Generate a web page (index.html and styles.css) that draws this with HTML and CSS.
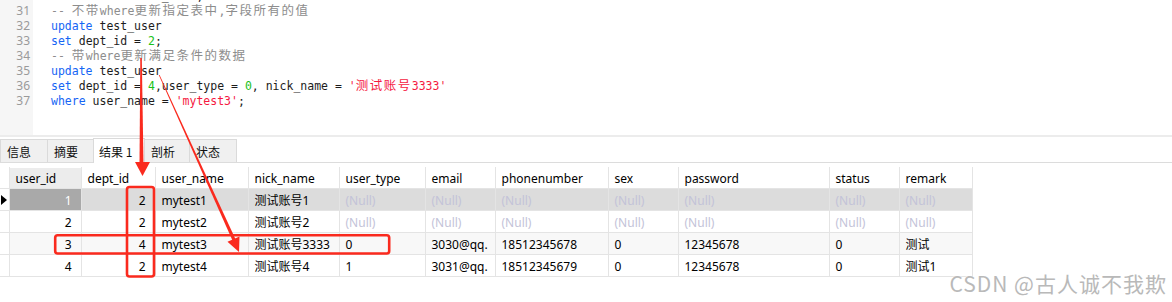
FILE: index.html
```html
<!DOCTYPE html>
<html lang="zh">
<head>
<meta charset="utf-8">
<title>update test_user</title>
<link rel="stylesheet" href="styles.css">
</head>
<body>
<div class="page">
  <div class="editor">
    <div class="gutter">
      <div class="lines">
        <div>30</div><div>31</div><div>32</div><div>33</div><div>34</div><div>35</div><div>36</div><div>37</div>
      </div>
    </div>
    <div class="code">
      <div class="lines">
        <div><span class="kw">delete</span> <span class="kw">from</span> test_user;</div>
        <div class="cm">-- <span class="w">不带</span>where<span class="w">更新指定表中</span>,<span class="w">字段所有的值</span></div>
        <div><span class="kw">update</span> test_user</div>
        <div><span class="kw">set</span> dept_id = <span class="num">2</span>;</div>
        <div class="cm">-- <span class="w">带</span>where<span class="w">更新满足条件的数据</span></div>
        <div><span class="kw">update</span> test_user</div>
        <div><span class="kw">set</span> dept_id = <span class="num">4</span>,user_type = <span class="num">0</span>, nick_name = <span class="str">'<span class="w">测试账号</span>3333'</span></div>
        <div><span class="kw">where</span> user_name = <span class="str">'mytest3'</span>;</div>
      </div>
    </div>
  </div>

  <div class="rule"></div>

  <div class="tabbar">
    <div class="tab">信息</div>
    <div class="tab">摘要</div>
    <div class="tab active">结果 1</div>
    <div class="tab">剖析</div>
    <div class="tab">状态</div>
  </div>

  <div class="result">
    <table class="grid">
      <colgroup>
        <col class="c-ind"><col class="c-uid"><col class="c-did"><col class="c-uname"><col class="c-nick"><col class="c-type"><col class="c-email"><col class="c-phone"><col class="c-sex"><col class="c-pass"><col class="c-status"><col class="c-remark">
      </colgroup>
      <thead>
        <tr>
          <th class="ind"></th><th class="sortcol">user_id</th><th>dept_id</th><th>user_name</th><th>nick_name</th><th>user_type</th><th>email</th><th>phonenumber</th><th>sex</th><th>password</th><th>status</th><th>remark</th>
        </tr>
      </thead>
      <tbody>
        <tr class="sel">
          <td class="ind"><span class="tri"></span></td><td class="r cur">1</td><td class="r">2</td><td>mytest1</td><td>测试账号1</td><td class="null">(Null)</td><td class="null">(Null)</td><td class="null">(Null)</td><td class="null">(Null)</td><td class="null">(Null)</td><td class="null">(Null)</td><td class="null">(Null)</td>
        </tr>
        <tr>
          <td class="ind"></td><td class="r">2</td><td class="r">2</td><td>mytest2</td><td>测试账号2</td><td class="null">(Null)</td><td class="null">(Null)</td><td class="null">(Null)</td><td class="null">(Null)</td><td class="null">(Null)</td><td class="null">(Null)</td><td class="null">(Null)</td>
        </tr>
        <tr class="alt">
          <td class="ind"></td><td class="r">3</td><td class="r">4</td><td>mytest3</td><td>测试账号3333</td><td>0</td><td>3030@qq.</td><td>18512345678</td><td>0</td><td>12345678</td><td>0</td><td>测试</td>
        </tr>
        <tr>
          <td class="ind"></td><td class="r">4</td><td class="r">2</td><td>mytest4</td><td>测试账号4</td><td>1</td><td>3031@qq.</td><td>18512345679</td><td>0</td><td>12345678</td><td>0</td><td>测试1</td>
        </tr>
      </tbody>
    </table>
  </div>

  <svg class="marks" width="1172" height="302" viewBox="0 0 1172 302" aria-hidden="true">
    <rect x="127" y="187" width="27" height="89.5" rx="2.5" fill="none" stroke="#fa2a1e" stroke-width="2.6"/>
    <rect x="55.2" y="235.3" width="334" height="18.2" rx="2.5" fill="none" stroke="#fa2a1e" stroke-width="2.6"/>
    <polygon points="140.3,58 141.8,58 143.5,164 139.5,164" fill="#fa2a1e"/>
    <polygon points="135,162 150,162 142.5,176" fill="#fa2a1e"/>
    <polygon points="158.8,75 159.6,75 236.8,242 233.6,243" fill="#fa2a1e"/>
    <polygon points="239,252 239.5,236.5 227.5,241.8" fill="#fa2a1e"/>
  </svg>

  <div class="watermark">CSDN @古人诚不我欺</div>
</div>
</body>
</html>
```

FILE: styles.css
```css
* { box-sizing: border-box; }

html, body {
  margin: 0;
  padding: 0;
  background: #ffffff;
}

body {
  font-family: "Noto Sans", "Noto Sans CJK SC", sans-serif;
  font-size: 12px;
  color: #000;
}

.page {
  position: relative;
  width: 1172px;
  height: 302px;
  overflow: hidden;
}

/* ---------- editor ---------- */
.editor {
  display: flex;
  height: 135px;
  overflow: hidden;
}

.gutter {
  width: 33px;
  background: #f6f6f6;
  color: #9a9a9a;
  text-align: right;
  padding-right: 3px;
  font-family: "Noto Sans", sans-serif;
  font-size: 12px;
}

.lines {
  margin-top: -12px;
}

.lines > div {
  height: 15px;
  line-height: 15px;
  white-space: pre;
}

.code {
  flex: 1;
  padding-left: 18px;
  font-family: "DejaVu Sans Mono", "Noto Sans CJK SC", monospace;
  font-size: 11.5px;
  color: #1c1c1c;
}

.code .lines {
  margin-top: -11px;
}

.code .w {
  font-family: "Noto Sans CJK SC", sans-serif;
  font-size: 12.5px;
  letter-spacing: 1.5px;
  line-height: 10px;
}

.kw { color: #1565f5; }
.num { color: #19c219; }
.str { color: #f5193f; }
.cm { color: #8d8d8d; }

/* ---------- tab bar ---------- */
.rule {
  height: 2px;
  background: #ececec;
}

.tabbar {
  display: flex;
  align-items: flex-end;
  height: 26px;
  border-bottom: 1px solid #dcdcdc;
}

.tab {
  height: 23px;
  line-height: 24px;
  padding: 0 6px;
  background: #f0f0f0;
  border: 1px solid #dadada;
  border-bottom: none;
  margin-right: -1px;
  font-family: "Noto Sans CJK SC", sans-serif;
  font-size: 12px;
  color: #111;
}

.tab:nth-child(1) { width: 48px; }
.tab:nth-child(2) { width: 47px; }
.tab:nth-child(3) { width: 52px; }
.tab:nth-child(4) { width: 46px; }
.tab:nth-child(5) { width: 48px; }

.tab.active {
  height: 25px;
  line-height: 25px;
  background: #ffffff;
  position: relative;
  bottom: -1px;
  padding-left: 5px;
}

/* ---------- result grid ---------- */
.result {
  padding-top: 4px;
}

.grid {
  border-collapse: collapse;
  table-layout: fixed;
  width: 972px;
}

.c-ind { width: 9px; }
.c-uid { width: 72px; }
.c-did { width: 74px; }
.c-uname { width: 93px; }
.c-nick { width: 91px; }
.c-type { width: 86px; }
.c-email { width: 70px; }
.c-phone { width: 113px; }
.c-sex { width: 70px; }
.c-pass { width: 151px; }
.c-status { width: 70px; }
.c-remark { width: 73px; }

.grid th,
.grid td {
  border: 1px solid #e4e4e4;
  padding: 2px 6px 0;
  height: 22px;
  line-height: 18px;
  text-align: left;
  font-weight: normal;
  white-space: nowrap;
  overflow: hidden;
  font-family: "Noto Sans", "Noto Sans CJK SC", sans-serif;
  font-size: 12px;
  color: #000;
}

.grid th {
  height: 21px;
  border-top-color: #ffffff;
  background: #ffffff;
}

.grid th.sortcol {
  background: #ececec;
}

.grid th.ind,
.grid td.ind {
  padding: 0;
  border-left: none;
  background: #ffffff;
}

.grid td.r {
  text-align: right;
  padding-right: 9px;
}

.grid tr.sel td { background: #dcdcdc; }
.grid tr.sel td.ind { background: #ffffff; }
.grid tr.sel td.cur { background: #a9a9a9; color: #ffffff; }
.grid tr.alt td { background: #f8f8f8; }
.grid tr.alt td.ind { background: #ffffff; }

.grid td.null { color: #c3c3d8; }

.tri {
  display: block;
  width: 0;
  height: 0;
  margin-left: 1px;
  border-top: 5px solid transparent;
  border-bottom: 5px solid transparent;
  border-left: 6px solid #000;
}

/* ---------- overlays ---------- */
.marks {
  position: absolute;
  left: 0;
  top: 0;
  pointer-events: none;
}

.watermark {
  position: absolute;
  right: 5px;
  top: 268px;
  font-family: "Noto Sans CJK SC", sans-serif;
  font-size: 21px;
  letter-spacing: 1px;
  color: #b9b9b9;
  text-shadow: 0 0 2px #ffffff, 0 0 1px #ffffff;
  white-space: nowrap;
}
```
